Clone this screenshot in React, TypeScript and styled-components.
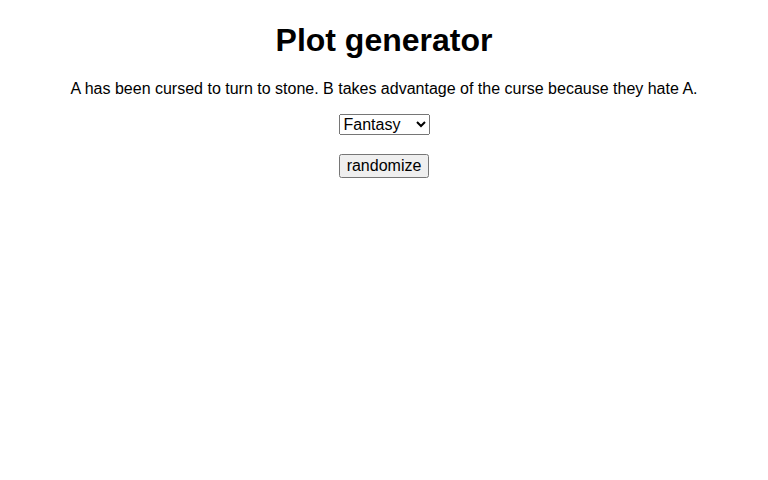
import { useState } from 'react';
import styled, { createGlobalStyle } from 'styled-components';

const GlobalStyle = createGlobalStyle`
  body {
    margin: 0;
    font-family: "Liberation Sans", Arial, sans-serif;
    background: #fff;
    color: #000;
  }
`;

const plots: Record<string, string[]> = {
  Fantasy: [
    'A has been cursed to turn to stone. B takes advantage of the curse because they hate A.',
  ],
};

export default function App() {
  const [genre, setGenre] = useState('Fantasy');
  const [index, setIndex] = useState(0);
  const list = plots[genre] ?? plots.Fantasy;

  return (
    <Page>
      <GlobalStyle />
      <Title>Plot generator</Title>
      <Plot>{list[index % list.length]}</Plot>
      <Row>
        <GenreSelect value={genre} onChange={(e) => setGenre(e.target.value)}>
          <option>Fantasy</option>
          <option>Sci-fi</option>
          <option>Romance</option>
          <option>Mystery</option>
        </GenreSelect>
      </Row>
      <Row $top={19}>
        <RandomButton onClick={() => setIndex(index + 1)}>randomize</RandomButton>
      </Row>
    </Page>
  );
}

const Page = styled('div')`
  padding: 1px 8px;
  text-align: center;
`;

const Title = styled('h1')`
  font-size: 32px;
  margin: 20.5px 0 21.44px;
`;

const Plot = styled('p')`
  font-size: 16px;
  margin: 16px 0;
`;

const Row = styled('p')<{ $top?: number }>`
  margin: ${({ $top }) => $top ?? 16}px 0 16px;
`;

const GenreSelect = styled('select')`
  font-family: "Liberation Sans", Arial, sans-serif;
  font-size: 16px;
`;

const RandomButton = styled('button')`
  font-family: "Liberation Sans", Arial, sans-serif;
  font-size: 16px;
`;
